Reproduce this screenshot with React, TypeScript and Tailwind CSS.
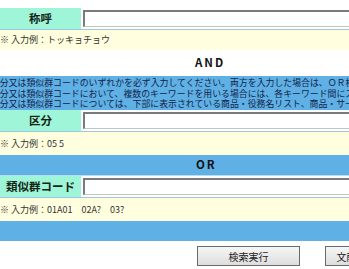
import React from "react";

const font = { fontFamily: '"Noto Sans CJK JP", "Noto Sans", sans-serif' };

const InputRow: React.FC<{ label: string }> = ({ label }) => (
  <div className="flex h-[22px] border-b border-[#9cc8e2]">
    <div className="w-[81px] shrink-0 bg-[#9ff5d8] flex items-center justify-center text-[11.5px] font-bold text-[#142414]">
      {label}
    </div>
    <div className="w-px bg-[#8cbfdf]" />
    <div className="flex-1 bg-white pl-[2px] pt-[2px]">
      <div className="h-[17px] w-[400px] bg-white border-t-2 border-l-2 border-t-[#7a7a7a] border-l-[#7a7a7a] border-b border-b-[#c4c4c4]" />
    </div>
  </div>
);

const Hint: React.FC<{ text: string; h: string }> = ({ text, h }) => (
  <div className={`${h} bg-[#ffffe0] flex items-center text-[9px] text-[#333] whitespace-nowrap`}>
    {text}
  </div>
);

export default function App() {
  return (
    <div className="w-[349px] h-[269px] overflow-hidden bg-white" style={font}>
      <div className="h-[8px] bg-white" />
      <InputRow label="称呼" />
      <Hint h="h-[20px]" text="※ 入力例：トッキョチョウ" />

      {/* AND */}
      <div className="h-[26px] bg-white flex items-center pl-[195px] text-[11.5px] font-bold tracking-[2px] text-[#111]">
        AND
      </div>

      {/* notes, wider than the window */}
      <div className="h-[34px] bg-[#5fb0e4] pt-[2px] overflow-hidden text-[8.9px] leading-[10.5px] text-[#13234a] whitespace-nowrap">
        <div className="-ml-[9px]">区分又は類似群コードのいずれかを必ず入力してください。両方を入力した場合は、ＯＲ検索となります。</div>
        <div className="-ml-[9px]">区分又は類似群コードにおいて、複数のキーワードを用いる場合には、各キーワード間にスペースを入れてください。</div>
        <div className="-ml-[9px]">区分又は類似群コードについては、下部に表示されている商品・役務名リスト、商品・サービス国際分類表を参照してください。</div>
      </div>

      <InputRow label="区分" />
      <Hint h="h-[23px]" text="※ 入力例：05 5" />

      {/* OR */}
      <div className="h-[21px] bg-[#5fb0e4] flex items-center pl-[196px] text-[11.5px] font-bold tracking-[2px] text-[#111] border-b border-[#b8dcf0]">
        OR
      </div>

      <InputRow label="類似群コード" />
      <Hint h="h-[23px]" text="※ 入力例：01A01　02A?　03?" />

      <div className="h-[20px] bg-[#5fb0e4]" />

      {/* buttons */}
      <div className="flex gap-[25px] pl-[197px] pt-[5px] whitespace-nowrap">
        <button className="w-[103px] h-[20px] shrink-0 border border-[#6a6a6a] bg-gradient-to-b from-[#f6f6f6] to-[#dedede] text-[10px] text-[#222]">
          検索実行
        </button>
        <button className="w-[103px] h-[20px] shrink-0 border border-[#6a6a6a] bg-gradient-to-b from-[#f6f6f6] to-[#dedede] text-[10px] text-[#222]">
          文献番号索引照会
        </button>
      </div>
    </div>
  );
}
